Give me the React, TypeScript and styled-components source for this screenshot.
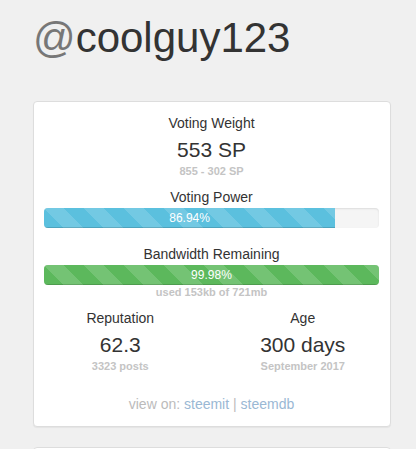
import React from 'react'
import styled, { createGlobalStyle } from 'styled-components'

const GlobalStyle = createGlobalStyle`
  html, body {
    margin: 0;
    padding: 0;
    background: #f0f0f0;
    font-family: "Liberation Sans", Arial, sans-serif;
    color: #333;
  }
`

const Page = styled.div`
  padding: 15px 0 0 33px;
  width: 358px;
`

const Title = styled.h1`
  margin: 0 0 40px;
  font-size: 42px;
  font-weight: 400;
  line-height: 1.1;
  color: #333;
`

const At = styled.span`
  color: #777;
`

const Panel = styled.div<{ $empty?: boolean }>`
  background: #fff;
  border: 1px solid #ddd;
  border-radius: 4px;
  box-shadow: 0 1px 1px rgba(0, 0, 0, 0.05);
  padding: ${p => (p.$empty ? '20px' : '11px 11px 12px 10px')};
  margin-bottom: 20px;
  text-align: center;
`

const Label = styled.div<{ $gap?: number }>`
  font-size: 14px;
  line-height: 20px;
  margin-top: ${p => p.$gap ?? 0}px;
  margin-bottom: 1px;
`

const BigValue = styled.div`
  font-size: 21px;
  line-height: 24px;
  margin-top: 5px;
`

const Muted = styled.div<{ $lh?: number; $gap?: number }>`
  font-size: 11px;
  font-weight: 700;
  line-height: ${p => p.$lh ?? 16}px;
  margin-top: ${p => p.$gap ?? 1}px;
  color: #c4c4c4;
`

const Progress = styled.div`
  height: 20px;
  background: #f5f5f5;
  border-radius: 4px;
  box-shadow: inset 0 1px 2px rgba(0, 0, 0, 0.1);
  overflow: hidden;
  text-align: left;
`

const Bar = styled.div<{ $color: string }>`
  height: 100%;
  background-color: ${p => p.$color};
  background-image: linear-gradient(
    45deg,
    rgba(255, 255, 255, 0.15) 25%,
    transparent 25%,
    transparent 50%,
    rgba(255, 255, 255, 0.15) 50%,
    rgba(255, 255, 255, 0.15) 75%,
    transparent 75%,
    transparent
  );
  background-size: 40px 40px;
  box-shadow: inset 0 -1px 0 rgba(0, 0, 0, 0.15);
  color: #fff;
  font-size: 12px;
  line-height: 20px;
  text-align: center;
`

const Stats = styled.div`
  display: grid;
  grid-template-columns: 1fr 1fr;
  margin: 9px -15px 0;
`

const Stat = styled.div`
  padding: 0 15px;
`

const Footer = styled.div`
  margin-top: 20px;
  font-size: 14px;
  line-height: 20px;
  color: #bbb;
`

const Link = styled.a`
  color: #9ab8d4;
  text-decoration: none;
`

const stats = [
  { label: 'Reputation', value: '62.3', sub: '3323 posts' },
  { label: 'Age', value: '300 days', sub: 'September 2017' },
]

export default function App() {
  const votingPower = 86.94
  const bandwidth = 99.98

  return (
    <Page>
      <GlobalStyle />
      <Title>
        <At>@</At>coolguy123
      </Title>

      <Panel>
        <Label>Voting Weight</Label>
        <BigValue>553 SP</BigValue>
        <Muted>855 - 302 SP</Muted>

        <Label $gap={8}>Voting Power</Label>
        <Progress>
          <Bar $color="#5bc0de" style={{ width: `${votingPower}%` }}>
            {votingPower}%
          </Bar>
        </Progress>

        <Label $gap={16}>Bandwidth Remaining</Label>
        <Progress>
          <Bar $color="#5cb85c" style={{ width: `${bandwidth}%` }}>
            {bandwidth}%
          </Bar>
        </Progress>
        <Muted $lh={14} $gap={0}>used 153kb of 721mb</Muted>

        <Stats>
          {stats.map(s => (
            <Stat key={s.label}>
              <Label>{s.label}</Label>
              <BigValue>{s.value}</BigValue>
              <Muted>{s.sub}</Muted>
            </Stat>
          ))}
        </Stats>

        <Footer>
          view on: <Link href="#">steemit</Link> | <Link href="#">steemdb</Link>
        </Footer>
      </Panel>

      <Panel $empty />
    </Page>
  )
}
